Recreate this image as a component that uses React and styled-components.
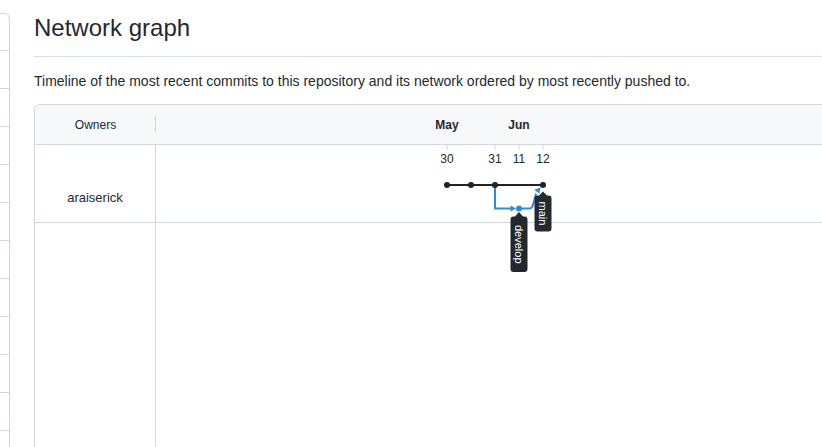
import React from 'react'
import styled, { createGlobalStyle } from 'styled-components'

const GlobalStyle = createGlobalStyle`
  html, body {
    margin: 0;
    padding: 0;
    background: #ffffff;
    overflow: hidden;
  }
  body {
    font-family: "Liberation Sans", Arial, sans-serif;
    color: #24292f;
  }
`

const ink = '#1f2328'
const blue = '#2f8bd8'

const commits = [291, 315, 339, 387]
const ticks = [
  { x: 291, label: '30' },
  { x: 339, label: '31' },
  { x: 363, label: '11' },
  { x: 387, label: '12' }
]
const months = [
  { x: 291, label: 'May' },
  { x: 363, label: 'Jun' }
]

const App = () => {
  return (
    <>
      <GlobalStyle />
      <Page>
        <Sidebar>
          {Array.from({ length: 12 }).map((_, i) => (
            <SideItem key={i} />
          ))}
        </Sidebar>
        <Main>
          <Heading>Network graph</Heading>
          <Lead>
            Timeline of the most recent commits to this repository and its network ordered by most recently pushed
            to.
          </Lead>
          <Graph>
            <HeaderRow>
              <OwnerHead>
                <span>Owners</span>
              </OwnerHead>
              <MonthStrip>
                {months.map((m) => (
                  <MonthLabel key={m.label} x={m.x} y={24}>
                    {m.label}
                  </MonthLabel>
                ))}
              </MonthStrip>
            </HeaderRow>
            <Row>
              <OwnerCell>araiserick</OwnerCell>
              <Canvas>
                <Commits />
              </Canvas>
            </Row>
            <RestRow>
              <EmptyOwner />
              <div />
            </RestRow>
          </Graph>
        </Main>
      </Page>
    </>
  )
}

export default App

const BranchTag = ({ cx, tipY, top, bottom, text }) => {
  const l = cx - 8.5
  const r = cx + 8.5
  const d = `M${l} ${top + 3} a3 3 0 0 1 3 -3 H${cx - 4} L${cx} ${tipY} L${cx + 4} ${top} H${r - 3} a3 3 0 0 1 3 3 V${bottom - 3} a3 3 0 0 1 -3 3 H${l + 3} a3 3 0 0 1 -3 -3 Z`
  const cy = (top + bottom) / 2
  return (
    <g>
      <path d={d} fill="#24292f" />
      <TagText x={cx} y={cy} transform={`rotate(90 ${cx} ${cy})`}>
        {text}
      </TagText>
    </g>
  )
}

const Commits = () => (
  <>
    {ticks.map((t) => (
      <g key={t.label}>
        <line x1={t.x} y1={0} x2={t.x} y2={5} stroke="#d0d7de" strokeWidth="1" />
        <DayLabel x={t.x} y={18}>
          {t.label}
        </DayLabel>
      </g>
    ))}
    <path d="M339 40 V63.5 H356" fill="none" stroke={blue} strokeWidth="2" />
    <polygon points="354.5,60.5 360,63.5 354.5,66.5" fill={blue} />
    <path d="M363 63.5 H374 C377 63.5 378 56 380 48.5" fill="none" stroke={blue} strokeWidth="2" />
    <polygon points="384.5,42.5 383.3,48.7 378.3,44.7" fill={blue} />
    <circle cx={363} cy={63.5} r={3} fill={blue} />
    <line x1={291} y1={40} x2={387} y2={40} stroke={ink} strokeWidth="2" />
    {commits.map((x) => (
      <circle key={x} cx={x} cy={40} r={3} fill={ink} />
    ))}
    <BranchTag cx={363} tipY={67} top={71.5} bottom={127} text="develop" />
    <BranchTag cx={387} tipY={46.5} top={50.5} bottom={86.5} text="main" />
  </>
)

const Page = styled.div`
  display: flex;
  align-items: flex-start;
  min-height: 447px;
`

const Sidebar = styled.div`
  flex-shrink: 0;
  box-sizing: border-box;
  width: 10px;
  margin-top: 13px;
  border: 1px solid #d0d7de;
  border-left: none;
  border-top-right-radius: 6px;
`

const SideItem = styled.div`
  height: 37px;
  border-bottom: 1px solid #d0d7de;

  &:first-child {
    height: 36px;
  }
`

const Main = styled.div`
  flex-shrink: 0;
  width: 840px;
  margin-left: 24px;
`

const Heading = styled.h2`
  margin: 13px 0 0;
  padding-bottom: 13px;
  font-size: 24px;
  font-weight: 400;
  line-height: 30px;
  border-bottom: 1px solid #d8dee4;
`

const Lead = styled.p`
  margin: 14px 0 12px;
  font-size: 14px;
  line-height: 21px;
`

const Graph = styled.div`
  box-sizing: border-box;
  height: 380px;
  display: flex;
  flex-direction: column;
  border: 1px solid #d0d7de;
  border-radius: 6px;
`

const HeaderRow = styled.div`
  display: grid;
  grid-template-columns: 121px 1fr;
  height: 39px;
  background: #f6f8fa;
  border-bottom: 1px solid #d0d7de;
  border-radius: 6px 6px 0 0;
`

const OwnerHead = styled.div`
  display: flex;
  align-items: center;
  justify-content: center;
  position: relative;
  font-size: 12px;
  line-height: 16px;

  &::after {
    content: '';
    position: absolute;
    right: 0;
    top: 10px;
    height: 18px;
    border-right: 1px solid #d0d7de;
  }
`

const MonthStrip = styled.svg`
  display: block;
  width: 100%;
  height: 39px;
`

const MonthLabel = styled.text`
  font-family: "Liberation Sans", Arial, sans-serif;
  font-size: 12px;
  font-weight: 700;
  fill: #24292f;
  text-anchor: middle;
`

const Row = styled.div`
  display: grid;
  grid-template-columns: 121px 1fr;
  height: 77px;
  border-bottom: 1px solid #d0d7de;
`

const OwnerCell = styled.div`
  display: flex;
  align-items: flex-end;
  justify-content: center;
  padding-bottom: 14px;
  font-size: 13px;
  line-height: 20px;
  border-right: 1px solid #d0d7de;
`

const Canvas = styled.svg`
  display: block;
  width: 100%;
  height: 77px;
  overflow: visible;
`

const DayLabel = styled.text`
  font-family: "Liberation Sans", Arial, sans-serif;
  font-size: 12px;
  fill: #24292f;
  text-anchor: middle;
`

const TagText = styled.text`
  font-family: "Liberation Sans", Arial, sans-serif;
  font-size: 11px;
  fill: #ffffff;
  text-anchor: middle;
  dominant-baseline: central;
`

const RestRow = styled.div`
  flex: 1;
  display: grid;
  grid-template-columns: 121px 1fr;
`

const EmptyOwner = styled.div`
  border-right: 1px solid #d0d7de;
`
